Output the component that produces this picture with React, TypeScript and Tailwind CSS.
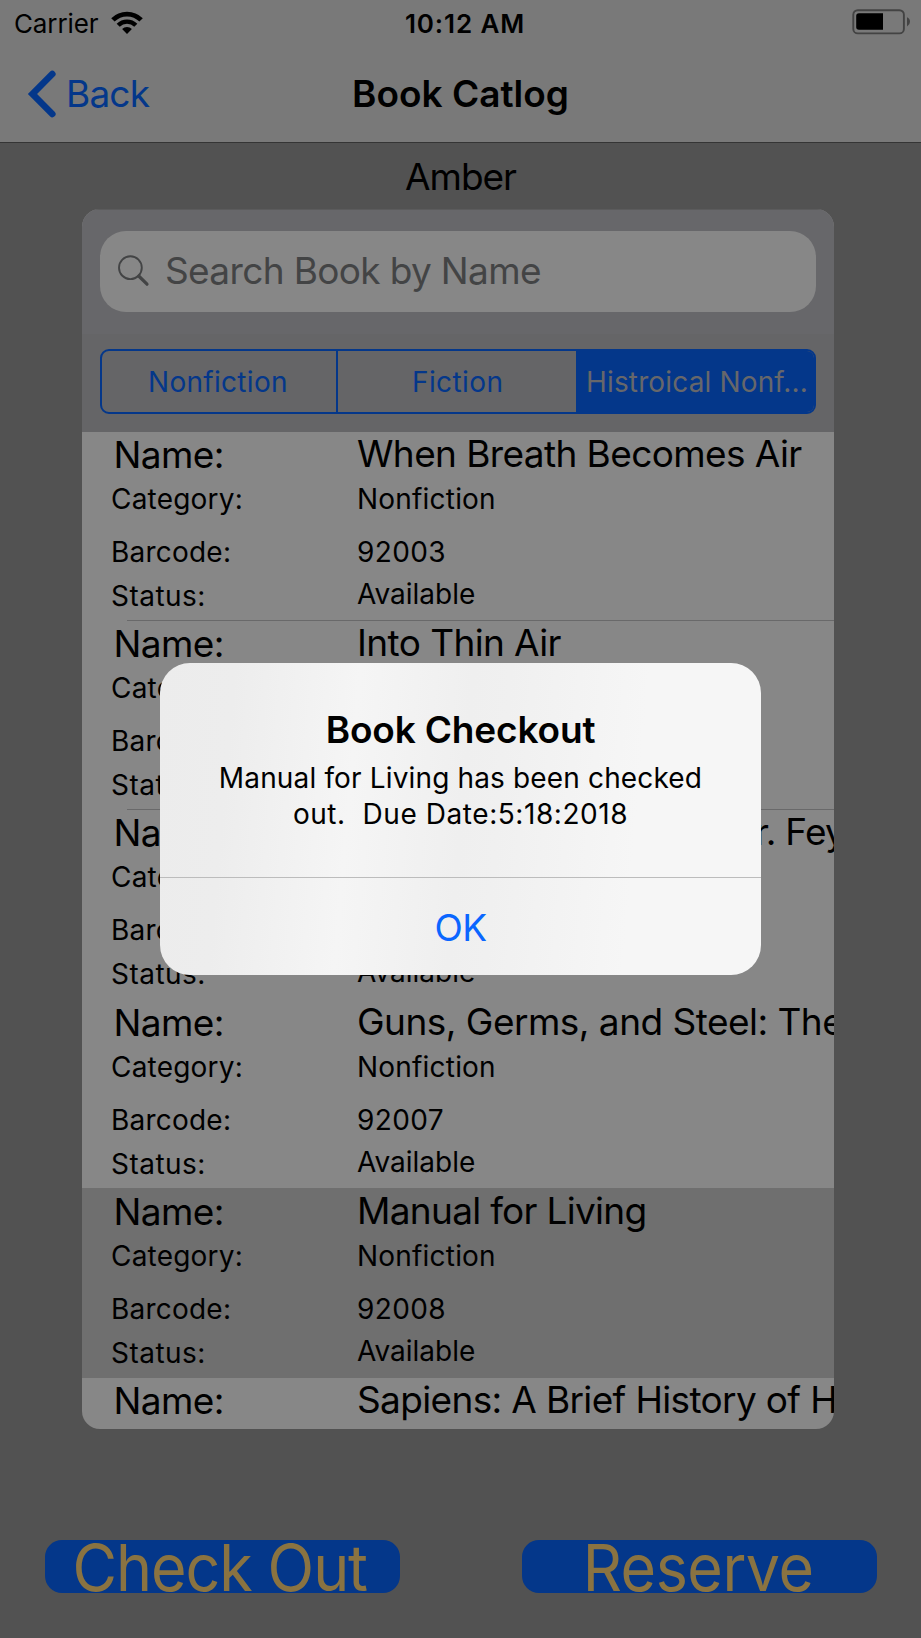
type Book = {
  name: string;
  tracking: string;
  barcode: string;
  selected?: boolean;
  separator?: boolean;
};

const books: Book[] = [
  { name: "When Breath Becomes Air", tracking: "tracking-[-0.6px]", barcode: "92003", separator: true },
  { name: "Into Thin Air", tracking: "tracking-[-0.6px]", barcode: "92005", separator: true },
  { name: "Surely You're Joking, Mr. Feynman!", tracking: "tracking-[-0.75px]", barcode: "92006" },
  { name: "Guns, Germs, and Steel: The Fates of Human Societies", tracking: "tracking-[-0.52px]", barcode: "92007" },
  { name: "Manual for Living", tracking: "tracking-[-0.7px]", barcode: "92008", selected: true },
  { name: "Sapiens: A Brief History of Humankind", tracking: "tracking-[-0.65px]", barcode: "92009" },
];

function WifiIcon() {
  return (
    <svg width="32" height="24" viewBox="0 0 32 24" fill="none" stroke="#000" className="relative -top-px ml-[12.5px] shrink-0">
      <path d="M1.9 8.9A20 20 0 0 1 30.1 8.9" strokeWidth="4.8" />
      <path d="M7.2 14.2A12.5 12.5 0 0 1 24.8 14.2" strokeWidth="4.4" />
      <path d="M16 23L11.1 18.1A7 7 0 0 1 20.9 18.1Z" fill="#000" stroke="none" />
    </svg>
  );
}

function BatteryIcon() {
  return (
    <svg width="59" height="26" viewBox="0 0 59 26" className="shrink-0">
      <rect x="1.3" y="1.2" width="50.6" height="23.2" rx="4.5" fill="none" stroke="#434343" strokeWidth="1.9" />
      <path d="M7 4.2H31V20.7H7Q4.2 20.7 4.2 18V7Q4.2 4.2 7 4.2Z" fill="#000" />
      <path d="M55 8.2Q58 9.6 58 12.7Q58 15.8 55 17.4Z" fill="#434343" />
    </svg>
  );
}

function Header() {
  return (
    <header className="h-[143px] shrink-0 border-b border-[#353535] bg-[#797979]">
      <div className="grid h-[47px] grid-cols-3 items-center">
        <div className="flex items-center pl-[14px]">
          <span className="text-[26px] tracking-[-0.12px]">Carrier</span>
          <WifiIcon />
        </div>
        <span className="pl-[9px] text-center text-[26px] font-semibold tracking-[0.89px]">10:12 AM</span>
        <div className="flex justify-end pr-[10px] pb-[3px]">
          <BatteryIcon />
        </div>
      </div>
      <div className="grid h-[93px] grid-cols-3 items-center">
        <div className="flex items-center pl-[27px] text-[#04378a]">
          <svg width="30" height="50" viewBox="0 0 30 50" fill="none" stroke="currentColor" strokeWidth="6.6" strokeLinecap="round">
            <path d="M25.3 5L5.5 25L25.3 45" />
          </svg>
          <span className="ml-[9px] text-[37px] tracking-[-0.81px]">Back</span>
        </div>
        <h1 className="text-center text-[37px] font-semibold">Book Catlog</h1>
      </div>
    </header>
  );
}

function SearchPanel() {
  return (
    <>
      <div className="h-[125px] shrink-0 border-t border-[#5b5b5c] bg-[#67676a] px-[18px] pt-[21px]">
        <div className="flex h-[81px] items-center rounded-[26px] bg-[#878787] pl-[17px] text-[#434445]">
          <svg width="34" height="34" viewBox="0 0 34 34" fill="none" stroke="currentColor" strokeLinecap="round">
            <circle cx="13.4" cy="12.7" r="11.4" strokeWidth="1.9" />
            <path d="M21.7 21L30 29.2" strokeWidth="3.2" />
          </svg>
          <span className="ml-[14px] pb-[2px] text-[37px] tracking-[-0.65px]">Search Book by Name</span>
        </div>
      </div>
      <div className="h-[98px] shrink-0 bg-[#656567] px-[18px] pt-[15px]">
        <div className="flex h-[65px] overflow-hidden rounded-[9px] border-2 border-[#04378a] text-[28px] leading-[63px] text-[#04378a]">
          <div className="w-[236px] border-r-2 border-[#04378a] pl-[46px] tracking-[0.3px]">Nonfiction</div>
          <div className="w-[238px] pl-[74px] tracking-[0.4px]">Fiction</div>
          <div className="flex-1 bg-[#04378a] pl-[10px] tracking-[0.15px] whitespace-nowrap text-[#67676a]">Histroical Nonf...</div>
        </div>
      </div>
    </>
  );
}

function BookRow({ book }: { book: Book }) {
  return (
    <li className={book.selected ? "h-[189.6px] shrink-0 bg-[#6f6f6f]" : "h-[189.1px] shrink-0"}>
      <dl className="grid grid-cols-[245px_1fr] pt-[0.3px] text-[28px] whitespace-nowrap">
        <dt className="pl-[31.5px] text-[37px] leading-[45px] tracking-[-0.6px]">Name:</dt>
        <dd className={`pl-[30px] text-[37px] leading-[44px] ${book.tracking}`}>{book.name}</dd>
        <dt className="pl-[29px] leading-[44px] tracking-[0.2px]">Category:</dt>
        <dd className="pl-[30px] leading-[44px] tracking-[0.2px]">Nonfiction</dd>
        <dt className="pl-[29px] leading-[63px] tracking-[0.22px]">Barcode:</dt>
        <dd className="pl-[30px] leading-[63px] tracking-[0.38px]">{book.barcode}</dd>
        <dt className="pl-[29px] leading-[25px] tracking-[0.47px]">Status:</dt>
        <dd className="pl-[30px] leading-[21px]">Available</dd>
      </dl>
      {book.separator && <div className="mt-[10.7px] ml-[45px] h-px bg-[#69696a]" />}
    </li>
  );
}

function Alert() {
  return (
    <div role="alertdialog" className="absolute top-[663px] left-[160px] flex h-[312px] w-[601px] flex-col rounded-[30px] bg-[linear-gradient(95deg,#ececec_0%,#ededed_12%,#f5f5f5_32%,#efefef_50%,#f0f0f0_56%,#f6f6f6_78%,#f6f6f6_100%)] text-center">
      <h2 className="mt-[44px] text-[37px] leading-[46px] font-semibold tracking-[-0.16px]">Book Checkout</h2>
      <p className="mt-[8px] text-[28px] leading-[35.5px] whitespace-pre">
        <span className="block tracking-[0.15px]">Manual for Living has been checked</span>
        <span className="block tracking-[0.56px]">{"out.  Due Date:5:18:2018"}</span>
      </p>
      <button className="mt-[45px] h-[98px] border-t border-[#bcbcbc] pt-[2px] text-[37px] tracking-[-0.7px] text-[#0a66ff]">OK</button>
    </div>
  );
}

export default function App() {
  return (
    <div className="relative flex h-[1638px] w-[921px] flex-col overflow-hidden bg-[#525252] font-['Inter',sans-serif] text-black">
      <Header />
      <div className="h-[66px] shrink-0 text-center text-[37px] leading-[67px] tracking-[-1px]">Amber</div>
      <main className="mr-[87px] ml-[82px] flex h-[1220px] shrink-0 flex-col overflow-hidden rounded-[18px] bg-[#878787]">
        <SearchPanel />
        <ul className="flex shrink-0 flex-col">
          {books.map((book) => (
            <BookRow key={book.barcode} book={book} />
          ))}
        </ul>
      </main>
      <footer className="mt-[111px] flex gap-[122px] pl-[44.5px] text-[64.5px] leading-[57px] text-[#8a7341]">
        <button className="flex h-[53px] w-[355px] items-start justify-center rounded-[17px] bg-[#04378a] pr-[4px]">
          <span className="block scale-x-[0.945] tracking-[-1.14px] whitespace-nowrap">Check Out</span>
        </button>
        <button className="flex h-[53px] w-[355px] items-start justify-center rounded-[17px] bg-[#04378a] pr-[1px]">
          <span className="block scale-x-[0.945] tracking-[-0.5px]">Reserve</span>
        </button>
      </footer>
      <Alert />
    </div>
  );
}
